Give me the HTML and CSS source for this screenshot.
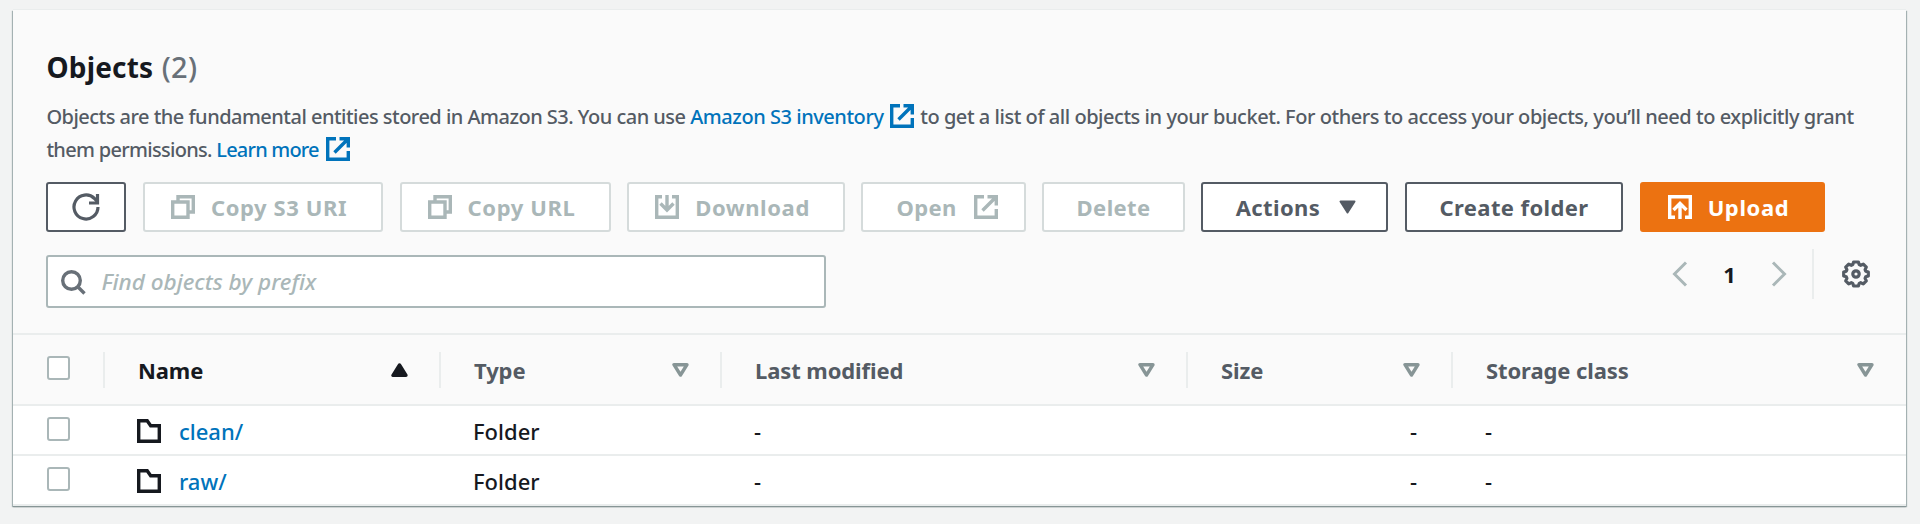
FILE: index.html
```
<!DOCTYPE html>
<html lang="en">
<head>
<meta charset="utf-8">
<title>Objects</title>
<link rel="stylesheet" href="styles.css">
</head>
<body>
<svg class="defs" aria-hidden="true">
  <symbol id="external" viewBox="0 0 24 24"><path d="M10 1.700H1.700v20.600h20.600V14M13.500 1.700h8.800V10.500M22 2 8.500 15.500"/></symbol>
  <symbol id="copy" viewBox="0 0 24 24"><path d="M1.700 7H17v15.300H1.700zM7 7V1.700h15.300V17H17"/></symbol>
  <symbol id="download" viewBox="0 0 24 24"><path d="M7 1.700H1.700v20.600h20.600V1.700H17M12 0v14.500M5.500 8.500 12 15l6.500-6.500"/></symbol>
  <symbol id="upload" viewBox="0 0 24 24"><path d="M7 22.300H1.700V1.700h20.600v20.600H17M12 24V8.500M5.500 15 12 8.500l6.500 6.500"/></symbol>
  <symbol id="folder" viewBox="0 0 24 24"><path d="M1.700 22.300V1.700h8.500l3.500 5h8.600v15.600z"/></symbol>
  <symbol id="sort" viewBox="0 0 17 14"><path d="M2 1.700h13L8.500 12z"/></symbol>
</svg>
<main class="panel">
  <header class="panel-head">
    <h1 class="title">Objects <span class="count">(2)</span></h1>
    <p class="description"><span class="intro">Objects are the fundamental entities stored in Amazon S3. You can use </span><a class="link" href="#">Amazon S3 inventory<svg class="icon link-icon"><use href="#external"/></svg></a> to get a list of all objects in your bucket. For others to access your objects, you’ll need to explicitly grant<br><span class="tight">them permissions. <a class="link" href="#">Learn more<svg class="icon link-icon"><use href="#external"/></svg></a></span></p>
    <div class="actions">
      <button class="btn btn-refresh" aria-label="Refresh"><svg class="refresh-icon" viewBox="0 0 28 28"><path d="M26 14a12 12 0 1 1-3.500-8.500L25.500 9"/><path d="M25.500 1v9H17"/></svg></button>
      <button class="btn lead disabled btn-uri"><svg class="icon"><use href="#copy"/></svg>Copy S3 URI</button>
      <button class="btn lead disabled btn-url"><svg class="icon"><use href="#copy"/></svg>Copy URL</button>
      <button class="btn lead disabled btn-download"><svg class="icon"><use href="#download"/></svg>Download</button>
      <button class="btn trail disabled btn-open">Open<svg class="icon"><use href="#external"/></svg></button>
      <button class="btn disabled btn-delete">Delete</button>
      <button class="btn btn-actions">Actions<svg class="caret" viewBox="0 0 17 14"><path d="M1.500 1.500h14L8.500 12.500z"/></svg></button>
      <button class="btn btn-create">Create folder</button>
      <button class="btn lead primary btn-upload"><svg class="icon"><use href="#upload"/></svg>Upload</button>
    </div>
    <div class="tools">
      <label class="search"><svg class="search-icon" viewBox="0 0 25 25"><circle cx="10.500" cy="10.500" r="8.800"/><path d="M16.500 16.500 23.500 23.500"/></svg><span class="placeholder">Find objects by prefix</span></label>
      <nav class="pagination">
        <svg class="chevron" viewBox="0 0 16 26"><path d="M14 1.500 2.500 13 14 24.500"/></svg>
        <span class="page">1</span>
        <svg class="chevron" viewBox="0 0 16 26"><path d="M2 1.500 13.500 13 2 24.500"/></svg>
        <span class="separator"></span>
        <svg class="gear" viewBox="0 0 28 28"><path d="M11.600 2h4.800l.8 2.600 1.500.7 2.600-1.200 3 3-1.200 2.600.6 1.500 2.600.8v4l-2.600.8-.6 1.500 1.200 2.600-3 3-2.600-1.200-1.500.7-.8 2.600h-4.800l-.8-2.600-1.500-.7-2.600 1.200-3-3 1.200-2.600-.6-1.500-2.600-.8v-4l2.600-.8.6-1.500-1.200-2.600 3-3 2.600 1.200 1.500-.7z"/><circle cx="14" cy="14" r="3.200"/></svg>
      </nav>
    </div>
  </header>
  <table class="objects">
    <colgroup><col class="c-check"><col class="c-name"><col class="c-type"><col class="c-modified"><col class="c-size"><col></colgroup>
    <thead>
      <tr>
        <th><span class="checkbox"></span></th>
        <th><div class="th sorted">Name<svg class="sort up"><use href="#sort"/></svg></div></th>
        <th><div class="th">Type<svg class="sort"><use href="#sort"/></svg></div></th>
        <th><div class="th">Last modified<svg class="sort"><use href="#sort"/></svg></div></th>
        <th><div class="th">Size<svg class="sort"><use href="#sort"/></svg></div></th>
        <th><div class="th">Storage class<svg class="sort"><use href="#sort"/></svg></div></th>
      </tr>
    </thead>
    <tbody>
      <tr>
        <td><span class="checkbox"></span></td>
        <td><div class="name"><svg class="icon"><use href="#folder"/></svg><a class="link" href="#">clean/</a></div></td>
        <td>Folder</td><td>-</td><td class="num">-</td><td>-</td>
      </tr>
      <tr>
        <td><span class="checkbox"></span></td>
        <td><div class="name"><svg class="icon"><use href="#folder"/></svg><a class="link" href="#">raw/</a></div></td>
        <td>Folder</td><td>-</td><td class="num">-</td><td>-</td>
      </tr>
    </tbody>
  </table>
</main>
</body>
</html>
```
FILE: styles.css
```
* { box-sizing: border-box; }

body {
  margin: 0;
  padding: 10px 14px 0 13px;
  height: 524px;
  overflow: hidden;
  background: #f2f3f3;
  color: #16191f;
  font: 500 22px/30px "Noto Sans", "Open Sans", sans-serif;
}

.defs { display: none; }

.icon {
  flex: none;
  width: 24px;
  height: 24px;
  fill: none;
  stroke: currentColor;
  stroke-width: 3.400;
}

.link {
  color: #0073bb;
  text-decoration: none;
}

.panel {
  height: 496px;
  background: #fff;
  border-bottom: 1px solid #879596;
  box-shadow: 0 -1px 0 #eaeded, 0 1px 1px #879596, 1px 1px 1px #aab7b8, -1px 1px 1px #aab7b8;
}

.panel-head {
  height: 325px;
  padding: 37px 35px 0 33.400px;
  background: #fafafa;
  border-bottom: 2px solid #eaeded;
}

.title {
  margin: 0;
  font-size: 28px;
  font-weight: 700;
  line-height: 40px;
  letter-spacing: 0.2px;
}

.count {
  margin-left: 1px;
  color: #687078;
  font-size: 29px;
  font-weight: 500;
}

.description {
  margin: 13px 0 0;
  color: #545b64;
  font-size: 20px;
  line-height: 33px;
  letter-spacing: -0.46px;
  white-space: nowrap;
}

.intro { letter-spacing: -0.52px; }
.description .tight { letter-spacing: -0.7px; }
.description .tight .link { letter-spacing: -0.8px; }

.link-icon {
  margin: 0 1px 0 7px;
  vertical-align: -4px;
}

.actions {
  display: flex;
  gap: 16.600px;
  margin-top: 16px;
}

.btn {
  display: flex;
  flex: none;
  align-items: center;
  justify-content: center;
  height: 50px;
  padding: 0;
  border: 2px solid #545b64;
  border-radius: 3px;
  background: #fff;
  color: #545b64;
  font: 700 22px/30px "Noto Sans", "Open Sans", sans-serif;
  letter-spacing: 0.4px;
  gap: 17px;
  white-space: nowrap;
}

.lead {
  justify-content: flex-start;
  padding-left: 26px;
  gap: 16px;
  letter-spacing: 0.6px;
}

.trail {
  justify-content: flex-end;
  padding-right: 26px;
}

.disabled {
  border-color: #d5dbdb;
  color: #aab7b8;
}

.primary {
  border-color: #ec7211;
  background: #ec7211;
  color: #fff;
}

.btn-refresh { width: 80px; }
.btn-uri { width: 240px; }
.btn-url { width: 211px; }
.btn-download { width: 217.500px; }
.btn-open { width: 164.500px; }
.btn-delete { width: 142.500px; }
.btn-actions { width: 187px; gap: 19px; padding-left: 2px; }
.btn-create { width: 218px; }
.btn-upload { width: 185.500px; }

.refresh-icon {
  width: 28px;
  height: 28px;
  fill: none;
  stroke: currentColor;
  stroke-width: 3.200;
}

.caret {
  width: 17px;
  height: 14px;
  fill: currentColor;
  stroke: currentColor;
  stroke-width: 2;
  stroke-linejoin: round;
}

.tools {
  display: flex;
  align-items: flex-start;
  justify-content: space-between;
  margin-top: 23px;
}

.search {
  display: flex;
  align-items: center;
  gap: 15px;
  width: 779.500px;
  height: 53px;
  padding: 1px 13px 0;
  border: 2px solid #aab7b8;
  border-radius: 3px;
  background: #fff;
}

.search-icon {
  width: 25px;
  height: 25px;
  fill: none;
  stroke: #687078;
  stroke-width: 3.400;
}

.placeholder {
  color: #aab7b8;
  font-size: 22.500px;
  font-style: italic;
}

.pagination {
  display: flex;
  align-items: center;
  height: 50px;
  margin-top: -6px;
}

.chevron {
  width: 16px;
  height: 26px;
  fill: none;
  stroke: #aab7b8;
  stroke-width: 3;
}

.page {
  width: 83px;
  text-align: center;
  font-weight: 700;
}

.separator {
  width: 2px;
  height: 50px;
  margin: 0 28px 0 25px;
  background: #eaeded;
}

.gear {
  width: 28px;
  height: 28px;
  margin-right: 1px;
  fill: none;
  stroke: #545b64;
  stroke-width: 3.200;
  stroke-linejoin: round;
}

.objects {
  width: 100%;
  border-collapse: collapse;
  table-layout: fixed;
}

.c-check { width: 90px; }
.c-name { width: 336px; }
.c-type { width: 281px; }
.c-modified { width: 466px; }
.c-size { width: 265px; }

.objects th {
  height: 70px;
  padding: 0;
  background: #fafafa;
  border-bottom: 2px solid #eaeded;
  color: #545b64;
  font-weight: 700;
  letter-spacing: -0.1px;
  text-align: left;
}

.th {
  display: flex;
  align-items: center;
  justify-content: space-between;
  height: 36px;
  padding: 0 31px 0 33px;
  border-left: 2px solid #eaeded;
}

.objects th:last-child .th { padding-right: 32px; }

.sorted { color: #16191f; }

.sort {
  width: 17px;
  height: 14px;
  fill: none;
  stroke: #879596;
  stroke-width: 3.400;
  stroke-linejoin: round;
}

.up {
  fill: #16191f;
  stroke: #16191f;
  transform: scaleY(-1);
}

.objects td {
  height: 50px;
  padding: 1px 34px 0;
  border-bottom: 2px solid #eaeded;
}

.objects .num { text-align: right; }

.name {
  display: flex;
  align-items: center;
  gap: 18px;
}

.checkbox {
  display: block;
  width: 23px;
  height: 24px;
  border: 2px solid #aab7b8;
  border-radius: 3px;
  background: #fff;
}

.objects th .checkbox { margin: 0 0 3px 34px; }
.objects td .checkbox { margin: 0 0 4px; }
```
